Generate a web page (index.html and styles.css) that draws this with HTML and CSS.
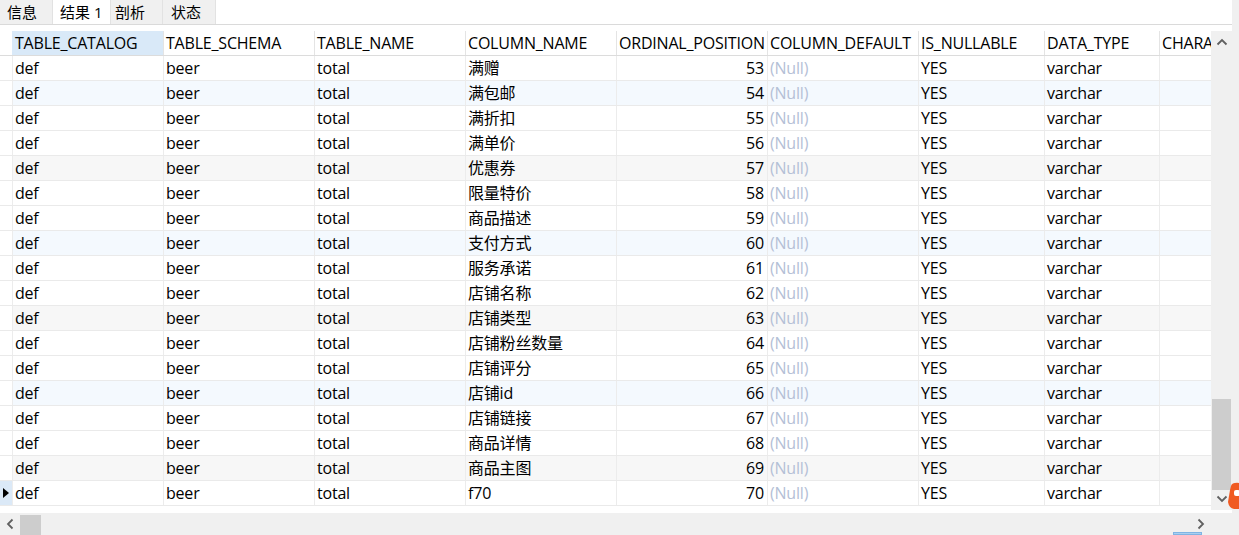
FILE: index.html
```html
<!DOCTYPE html>
<html>
<head>
<meta charset="utf-8">
<link rel="stylesheet" href="styles.css">
</head>
<body>
<div class="page">
  <div class="main">
    <div class="tabs">
      <div class="tab">信息</div>
      <div class="tab active">结果 1</div>
      <div class="tab">剖析</div>
      <div class="tab">状态</div>
      <div class="tabfill"></div>
    </div>
    <div class="gap"></div>
    <div class="gridwrap">
      <div class="grid">
        <div class="row head">
          <div class="gut"></div>
          <div class="c w151 sel">TABLE_CATALOG</div>
          <div class="c w151">TABLE_SCHEMA</div>
          <div class="c w151">TABLE_NAME</div>
          <div class="c w151">COLUMN_NAME</div>
          <div class="c w151">ORDINAL_POSITION</div>
          <div class="c w151">COLUMN_DEFAULT</div>
          <div class="c w126">IS_NULLABLE</div>
          <div class="c w115">DATA_TYPE</div>
          <div class="c wlast">CHARA</div>
        </div>
        <div class="row"><div class="gut"></div><div class="c w151">def</div><div class="c w151">beer</div><div class="c w151">total</div><div class="c w151">满赠</div><div class="c w151 num">53</div><div class="c w151 null">(Null)</div><div class="c w126">YES</div><div class="c w115">varchar</div><div class="c wlast"></div></div>
        <div class="row blue"><div class="gut"></div><div class="c w151">def</div><div class="c w151">beer</div><div class="c w151">total</div><div class="c w151">满包邮</div><div class="c w151 num">54</div><div class="c w151 null">(Null)</div><div class="c w126">YES</div><div class="c w115">varchar</div><div class="c wlast"></div></div>
        <div class="row"><div class="gut"></div><div class="c w151">def</div><div class="c w151">beer</div><div class="c w151">total</div><div class="c w151">满折扣</div><div class="c w151 num">55</div><div class="c w151 null">(Null)</div><div class="c w126">YES</div><div class="c w115">varchar</div><div class="c wlast"></div></div>
        <div class="row"><div class="gut"></div><div class="c w151">def</div><div class="c w151">beer</div><div class="c w151">total</div><div class="c w151">满单价</div><div class="c w151 num">56</div><div class="c w151 null">(Null)</div><div class="c w126">YES</div><div class="c w115">varchar</div><div class="c wlast"></div></div>
        <div class="row gray"><div class="gut"></div><div class="c w151">def</div><div class="c w151">beer</div><div class="c w151">total</div><div class="c w151">优惠券</div><div class="c w151 num">57</div><div class="c w151 null">(Null)</div><div class="c w126">YES</div><div class="c w115">varchar</div><div class="c wlast"></div></div>
        <div class="row"><div class="gut"></div><div class="c w151">def</div><div class="c w151">beer</div><div class="c w151">total</div><div class="c w151">限量特价</div><div class="c w151 num">58</div><div class="c w151 null">(Null)</div><div class="c w126">YES</div><div class="c w115">varchar</div><div class="c wlast"></div></div>
        <div class="row"><div class="gut"></div><div class="c w151">def</div><div class="c w151">beer</div><div class="c w151">total</div><div class="c w151">商品描述</div><div class="c w151 num">59</div><div class="c w151 null">(Null)</div><div class="c w126">YES</div><div class="c w115">varchar</div><div class="c wlast"></div></div>
        <div class="row blue"><div class="gut"></div><div class="c w151">def</div><div class="c w151">beer</div><div class="c w151">total</div><div class="c w151">支付方式</div><div class="c w151 num">60</div><div class="c w151 null">(Null)</div><div class="c w126">YES</div><div class="c w115">varchar</div><div class="c wlast"></div></div>
        <div class="row"><div class="gut"></div><div class="c w151">def</div><div class="c w151">beer</div><div class="c w151">total</div><div class="c w151">服务承诺</div><div class="c w151 num">61</div><div class="c w151 null">(Null)</div><div class="c w126">YES</div><div class="c w115">varchar</div><div class="c wlast"></div></div>
        <div class="row"><div class="gut"></div><div class="c w151">def</div><div class="c w151">beer</div><div class="c w151">total</div><div class="c w151">店铺名称</div><div class="c w151 num">62</div><div class="c w151 null">(Null)</div><div class="c w126">YES</div><div class="c w115">varchar</div><div class="c wlast"></div></div>
        <div class="row gray"><div class="gut"></div><div class="c w151">def</div><div class="c w151">beer</div><div class="c w151">total</div><div class="c w151">店铺类型</div><div class="c w151 num">63</div><div class="c w151 null">(Null)</div><div class="c w126">YES</div><div class="c w115">varchar</div><div class="c wlast"></div></div>
        <div class="row"><div class="gut"></div><div class="c w151">def</div><div class="c w151">beer</div><div class="c w151">total</div><div class="c w151">店铺粉丝数量</div><div class="c w151 num">64</div><div class="c w151 null">(Null)</div><div class="c w126">YES</div><div class="c w115">varchar</div><div class="c wlast"></div></div>
        <div class="row"><div class="gut"></div><div class="c w151">def</div><div class="c w151">beer</div><div class="c w151">total</div><div class="c w151">店铺评分</div><div class="c w151 num">65</div><div class="c w151 null">(Null)</div><div class="c w126">YES</div><div class="c w115">varchar</div><div class="c wlast"></div></div>
        <div class="row blue"><div class="gut"></div><div class="c w151">def</div><div class="c w151">beer</div><div class="c w151">total</div><div class="c w151">店铺id</div><div class="c w151 num">66</div><div class="c w151 null">(Null)</div><div class="c w126">YES</div><div class="c w115">varchar</div><div class="c wlast"></div></div>
        <div class="row"><div class="gut"></div><div class="c w151">def</div><div class="c w151">beer</div><div class="c w151">total</div><div class="c w151">店铺链接</div><div class="c w151 num">67</div><div class="c w151 null">(Null)</div><div class="c w126">YES</div><div class="c w115">varchar</div><div class="c wlast"></div></div>
        <div class="row"><div class="gut"></div><div class="c w151">def</div><div class="c w151">beer</div><div class="c w151">total</div><div class="c w151">商品详情</div><div class="c w151 num">68</div><div class="c w151 null">(Null)</div><div class="c w126">YES</div><div class="c w115">varchar</div><div class="c wlast"></div></div>
        <div class="row gray"><div class="gut"></div><div class="c w151">def</div><div class="c w151">beer</div><div class="c w151">total</div><div class="c w151">商品主图</div><div class="c w151 num">69</div><div class="c w151 null">(Null)</div><div class="c w126">YES</div><div class="c w115">varchar</div><div class="c wlast"></div></div>
        <div class="row"><div class="gut cur"><svg width="6" height="10" viewBox="0 0 6 10"><path d="M0 0 L6 5 L0 10 Z" fill="#000"/></svg></div><div class="c w151">def</div><div class="c w151">beer</div><div class="c w151">total</div><div class="c w151">f70</div><div class="c w151 num">70</div><div class="c w151 null">(Null)</div><div class="c w126">YES</div><div class="c w115">varchar</div><div class="c wlast"></div></div>
      </div>
      <div class="vscroll">
        <div class="arrow"><svg width="12" height="8" viewBox="0 0 12 8"><path d="M1.5 6.5 L6 2 L10.5 6.5" fill="none" stroke="#606060" stroke-width="1.8"/></svg></div>
        <div class="vtrack"><div class="vthumb"></div></div>
        <div class="arrow"><svg width="12" height="8" viewBox="0 0 12 8"><path d="M1.5 1.5 L6 6 L10.5 1.5" fill="none" stroke="#606060" stroke-width="1.8"/></svg></div>
      </div>
    </div>
    <div class="bottom">
      <div class="hscroll">
        <div class="harrow"><svg width="8" height="12" viewBox="0 0 8 12"><path d="M6.5 1.5 L2 6 L6.5 10.5" fill="none" stroke="#606060" stroke-width="1.8"/></svg></div>
        <div class="hthumb"></div>
        <div class="htrack"></div>
        <div class="harrow"><svg width="8" height="12" viewBox="0 0 8 12"><path d="M1.5 1.5 L6 6 L1.5 10.5" fill="none" stroke="#606060" stroke-width="1.8"/></svg></div>
      </div>
      <div class="corner"></div>
    </div>
  </div>
  <div class="strip"></div>
</div>
<svg class="badge" width="12" height="28" viewBox="0 0 12 28"><path d="M3 4 Q4 0 12 1 L12 27 L6 27 Q1 26 0 20 L2 8 Z" fill="#f05a22"/><rect x="6" y="8" width="6" height="6" rx="2" fill="#fff"/></svg>
<div class="hmark"></div>
</body>
</html>
```
FILE: styles.css
```css
html, body {
  margin: 0;
  padding: 0;
  background: #f0f0f0;
}
body {
  font-family: "Open Sans", "Noto Sans CJK SC", sans-serif;
  font-size: 16px;
  letter-spacing: -0.2px;
  color: #000;
  width: 1239px;
  height: 535px;
  overflow: hidden;
  position: relative;
}
.page {
  display: flex;
  height: 535px;
}
.main {
  width: 1232px;
  display: flex;
  flex-direction: column;
  background: #fff;
}
.strip {
  width: 7px;
  background: #f0f0f0;
}
.tabs {
  display: flex;
  height: 24px;
  border-bottom: 1px solid #dadada;
  font-size: 15px;
  letter-spacing: 0;
}
.tab {
  background: #f0f0f0;
  border-right: 1px solid #e2e2e2;
  line-height: 24px;
  padding: 0 0 0 7px;
  box-sizing: border-box;
  width: 53px;
}
.tab.active {
  background: #fff;
  width: 58px;
  padding-left: 7px;
}
.tab:nth-child(3) { width: 52px; padding-left: 4px; }
.tab:nth-child(4) { width: 53px; padding-left: 8px; }
.tabfill { flex: 1; background: #fff; }
.gap { height: 6px; }
.gridwrap {
  display: flex;
  height: 479px;
}
.grid {
  width: 1211px;
  overflow: hidden;
}
.row {
  display: flex;
  height: 24px;
  border-bottom: 1px solid #eaeaea;
  background: #fff;
}
.row.blue { background: #f4f9fe; }
.row.gray { background: #f7f7f7; }
.row.head { border-bottom: 1px solid #dcdcdc; }
.gut {
  width: 12px;
  flex: none;
  background: #fff;
  display: flex;
  align-items: center;
  justify-content: center;
}
.gut.cur { background: #dbe9f7; }
.c {
  flex: none;
  box-sizing: border-box;
  padding: 0 3px 0 2px;
  line-height: 24px;
  white-space: nowrap;
  overflow: hidden;
  border-left: 1px solid #ececec;
}
.head .c { border-left: 1px solid #e4e4e4; }
.head .c.sel { background: #d9e9f8; border-left-color: #d9e9f8; }
.w151 { width: 151px; }
.w126 { width: 126px; }
.w115 { width: 115px; }
.wlast { width: 52px; }
.num { text-align: right; }
.null { color: #b4c0d6; }
.vscroll {
  width: 21px;
  background: #f0f0f0;
  display: flex;
  flex-direction: column;
}
.arrow {
  height: 22px;
  display: flex;
  align-items: center;
  justify-content: center;
}
.vtrack {
  flex: 1;
  display: flex;
  flex-direction: column;
  justify-content: flex-end;
  padding: 0 1px;
}
.vthumb {
  height: 91px;
  background: #cdcdcd;
  margin-bottom: -2px;
}
.bottom {
  display: flex;
  margin-top: 3px;
  height: 22px;
}
.hscroll {
  width: 1211px;
  background: #f0f0f0;
  display: flex;
  align-items: stretch;
}
.corner { flex: 1; background: #f0f0f0; }
.harrow {
  width: 20px;
  display: flex;
  align-items: center;
  justify-content: center;
}
.hthumb {
  width: 21px;
  background: #cdcdcd;
  margin: 2px 0 0 0;
}
.htrack { flex: 1; }
.badge {
  position: absolute;
  left: 1228px;
  top: 482px;
}
.hmark {
  position: absolute;
  left: 1173px;
  top: 532px;
  width: 29px;
  height: 3px;
  background: #a9cff0;
  border: 1px solid #7fb4e4;
  box-sizing: border-box;
}
```
